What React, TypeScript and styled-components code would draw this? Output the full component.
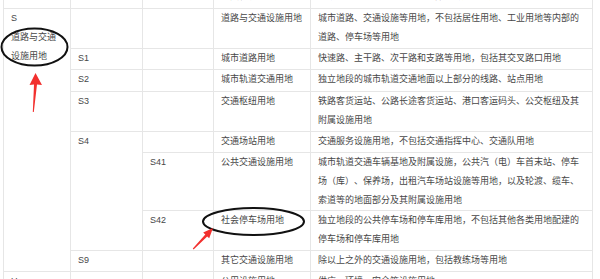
import React from "react";
import styled, { createGlobalStyle } from "styled-components";

const GlobalStyle = createGlobalStyle`
  html, body {
    margin: 0;
    padding: 0;
    background: #fff;
  }
  body {
    overflow: hidden;
  }
`;

const Page = styled.div`
  position: relative;
  width: 600px;
  height: 279px;
  overflow: hidden;
  background: #fff;
`;

const Table = styled.div`
  display: grid;
  width: fit-content;
  grid-template-columns: 66px 71px 70px 96px 281px;
  grid-template-rows: 21px 39px 20px 21px 39px 20px 57px 39px 20px 40px;
  gap: 1px;
  padding: 1px;
  margin: -14px 0 0 3px;
  background: #e6e6e6;
  font-family: "Liberation Sans", "Noto Sans CJK SC", sans-serif;
  font-size: 9px;
  line-height: 19px;
  color: #474747;
`;

const Cell = styled.div<{ $col: number; $row: number; $span?: number }>`
  grid-column: ${(p) => p.$col};
  grid-row: ${(p) => p.$row} / span ${(p) => p.$span ?? 1};
  background: #fff;
  padding: 0 7px;
  overflow: hidden;
  text-spacing-trim: space-all;
`;

const Line = styled.span`
  display: block;
  white-space: nowrap;
`;

const Overlay = styled.svg`
  position: absolute;
  top: 0;
  left: 0;
  pointer-events: none;
`;

type Row = {
  r: number;
  code?: string;
  sub?: string;
  name: string;
  desc: string[];
};

// grid row number -> content of columns 2..5
const rows: Row[] = [
  { r: 1, code: "W3", name: "三类物流仓储用地", desc: ["存放易燃、易爆和剧毒等危险品的专用仓库用地"] },
  {
    r: 2,
    name: "道路与交通设施用地",
    desc: ["城市道路、交通设施等用地，不包括居住用地、工业用地等内部的", "道路、停车场等用地"],
  },
  { r: 3, code: "S1", name: "城市道路用地", desc: ["快速路、主干路、次干路和支路等用地，包括其交叉路口用地"] },
  { r: 4, code: "S2", name: "城市轨道交通用地", desc: ["独立地段的城市轨道交通地面以上部分的线路、站点用地"] },
  {
    r: 5,
    code: "S3",
    name: "交通枢纽用地",
    desc: ["铁路客货运站、公路长途客货运站、港口客运码头、公交枢纽及其", "附属设施用地"],
  },
  { r: 6, name: "交通场站用地", desc: ["交通服务设施用地，不包括交通指挥中心、交通队用地"] },
  {
    r: 7,
    sub: "S41",
    name: "公共交通设施用地",
    desc: [
      "城市轨道交通车辆基地及附属设施，公共汽（电）车首末站、停车",
      "场（库）、保养场，出租汽车场站设施等用地，以及轮渡、缆车、",
      "索道等的地面部分及其附属设施用地",
    ],
  },
  {
    r: 8,
    sub: "S42",
    name: "社会停车场用地",
    desc: ["独立地段的公共停车场和停车库用地，不包括其他各类用地配建的", "停车场和停车库用地"],
  },
  { r: 9, code: "S9", name: "其它交通设施用地", desc: ["除以上之外的交通设施用地，包括教练场等用地"] },
  { r: 10, name: "公用设施用地", desc: ["供应、环境、安全等设施用地"] },
];

export default function App() {
  return (
    <Page>
      <GlobalStyle />
      <Table>
        <Cell $col={1} $row={1} />
        <Cell $col={1} $row={2} $span={8}>
          <Line>S</Line>
          <Line>道路与交通</Line>
          <Line>设施用地</Line>
        </Cell>
        <Cell $col={1} $row={10}>
          <Line>U</Line>
          <Line>公用设施用地</Line>
        </Cell>

        {/* S4 spans its own row and the S41 / S42 rows */}
        <Cell $col={2} $row={6} $span={3}>
          S4
        </Cell>

        {rows.map((row) => (
          <React.Fragment key={row.r}>
            {row.r !== 6 && row.r !== 7 && row.r !== 8 && (
              <Cell $col={2} $row={row.r}>
                {row.code}
              </Cell>
            )}
            <Cell $col={3} $row={row.r}>
              {row.sub}
            </Cell>
            <Cell $col={4} $row={row.r}>
              {row.name}
            </Cell>
            <Cell $col={5} $row={row.r}>
              {row.desc.map((d) => (
                <Line key={d}>{d}</Line>
              ))}
            </Cell>
          </React.Fragment>
        ))}
      </Table>

      <Overlay width="600" height="279" viewBox="0 0 600 279">
        <ellipse cx="34.5" cy="47" rx="33" ry="18.5" fill="none" stroke="#111" strokeWidth="2" />
        <polygon points="35.5,73 42,85 37,84.5 33.8,112 32.8,112 34,84.5 29.5,85" fill="#f2302e" />
        <ellipse cx="253.5" cy="221.5" rx="50.5" ry="13.5" fill="none" stroke="#111" strokeWidth="2" />
        <polygon
          points="213,228 209.2,238.3 207.2,236.4 193.6,249.4 192.8,248.6 205.3,234.6 203.2,232.4"
          fill="#f2302e"
        />
      </Overlay>
    </Page>
  );
}
